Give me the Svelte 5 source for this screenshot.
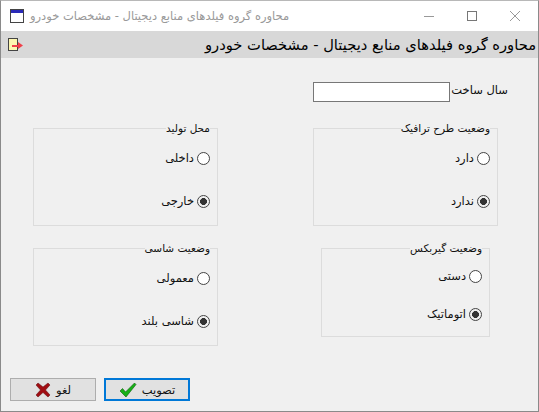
<script>
    const title = 'محاوره گروه فیلدهای منابع دیجیتال - مشخصات خودرو';

    const groups = [
        { name: 'origin', legend: 'محل تولید', cls: 'g-origin', options: ['داخلی', 'خارجی'] },
        { name: 'traffic', legend: 'وضعیت طرح ترافیک', cls: 'g-traffic', options: ['دارد', 'ندارد'] },
        { name: 'chassis', legend: 'وضعیت شاسی', cls: 'g-chassis', options: ['معمولی', 'شاسی بلند'] },
        { name: 'gearbox', legend: 'وضعیت گیربکس', cls: 'g-gearbox', options: ['دستی', 'اتوماتیک'] }
    ];
</script>

<div class="window">
    <div class="titlebar">
        <svg class="app-icon" width="14" height="15" viewBox="0 0 14 15">
            <rect x="0.5" y="0.5" width="13" height="13" fill="#fff" stroke="#444" />
            <rect x="1" y="1" width="12" height="3" fill="#2a2ab8" />
        </svg>
        <span class="title-text" dir="rtl">{title}</span>
        <div class="controls">
            <svg width="12" height="12" viewBox="0 0 12 12"><path d="M1 6.5h10" stroke="#999" fill="none" /></svg>
            <svg width="12" height="12" viewBox="0 0 12 12"><rect x="1.500" y="1.500" width="9" height="9" stroke="#777" fill="none" /></svg>
            <svg width="12" height="12" viewBox="0 0 12 12"><path d="M1 1l10 10M11 1L1 11" stroke="#999" fill="none" /></svg>
        </div>
    </div>

    <div class="band">
        <svg class="exit" width="16" height="14" viewBox="0 0 16 14">
            <rect x="0.5" y="0.5" width="9" height="12" fill="#fdf6b0" stroke="#444" />
            <path d="M4 7h6V4l5 3.500-5 3.500V9H4z" fill="#f0404a" />
        </svg>
        <span class="band-title" dir="rtl">{title}</span>
    </div>

    <div class="form">
        <div class="year">
            <input class="year-input" type="text" />
            <span class="text" dir="rtl">سال ساخت</span>
        </div>

        <div class="groups">
            {#each groups as g}
                <fieldset class="group {g.cls}">
                    <legend dir="rtl">{g.legend}</legend>
                    {#each g.options as opt, i}
                        <label class="radio">
                            <span class="text" dir="rtl">{opt}</span>
                            <input type="radio" name={g.name} checked={i === 1} />
                        </label>
                    {/each}
                </fieldset>
            {/each}
        </div>

        <div class="buttons">
            <button class="btn">
                <svg width="16" height="16" viewBox="0 0 16 16">
                    <path d="M1 3l2-2 5 4 5-4 2 2-4.500 5 4.500 5-2 2-5-4.500L3 15l-2-2 4.500-5z" fill="#a00d12" stroke="#5e0a0e" stroke-width="0.5" />
                </svg>
                <span dir="rtl">لغو</span>
            </button>
            <button class="btn primary">
                <svg width="18" height="16" viewBox="0 0 18 16">
                    <path d="M1 9l2.500-2.500L6.500 10 15.500 1 17 2.500 7 15z" fill="#16b016" stroke="#0c5c0c" stroke-width="0.6" />
                </svg>
                <span dir="rtl">تصویب</span>
            </button>
        </div>
    </div>
</div>

<style>
    :global(body) {
        background: #f0f0f0;
    }

    .window {
        width: 539px;
        height: 412px;
        box-sizing: border-box;
        border: 1px solid #8a8a8a;
        border-top-color: #b8b8b8;
        background: #f0f0f0;
        display: flex;
        flex-direction: column;
        font-family: "DejaVu Sans", sans-serif;
        color: #111;
        overflow: hidden;
    }

    .titlebar {
        height: 30px;
        background: #fff;
        display: flex;
        align-items: center;
        padding-left: 9px;
        gap: 6px;
        flex: none;
    }

    .app-icon {
        flex: none;
    }

    .title-text {
        font-size: 11.5px;
        color: #999;
    }

    .controls {
        margin-left: auto;
        display: flex;
        align-items: center;
        gap: 31px;
        padding-right: 17px;
    }

    .controls svg {
        display: block;
    }

    .band {
        height: 27px;
        background: #d8d8d8;
        display: flex;
        align-items: center;
        justify-content: space-between;
        padding: 0 2px 0 7px;
        flex: none;
    }

    .band-title {
        font-size: 14.7px;
        color: #000;
    }

    .form {
        flex: 1;
        display: flex;
        flex-direction: column;
        padding: 24px 30px 10px 9px;
    }

    .year {
        display: flex;
        align-items: center;
        justify-content: flex-end;
        gap: 3px;
        height: 20px;
    }

    .year-input {
        width: 137px;
        height: 20px;
        box-sizing: border-box;
        border: 1px solid #777;
        background: #fff;
        margin: 0;
        padding: 0;
    }

    .text,
    .btn span {
        font-size: 11.5px;
        color: #111;
        white-space: nowrap;
    }

    .year .text {
        width: 55px;
        margin-bottom: 5px;
    }

    legend {
        font-size: 10.500px;
        color: #111;
        position: absolute;
        top: -8px;
        right: 7px;
        padding: 0;
        background: #f0f0f0;
        line-height: 14px;
    }

    .groups {
        display: grid;
        grid-template-columns: 185px 185px;
        justify-content: space-between;
        grid-template-rows: 98px 98px;
        row-gap: 22px;
        margin-top: 26px;
        margin-left: 23px;
        margin-right: 10px;
    }

    .group {
        margin: 0;
        padding: 0 7px 0 0;
        border: 1px solid #dcdcdc;
        position: relative;
        box-sizing: border-box;
        display: flex;
        flex-direction: column;
        align-items: flex-end;
        min-width: 0;
    }

    .g-gearbox {
        width: 169px;
        height: 89px;
        margin-left: 8px;
    }

    .radio {
        display: flex;
        align-items: center;
        gap: 3px;
        height: 14px;
        margin-top: 22px;
    }

    .radio + .radio {
        margin-top: 29px;
    }

    .g-gearbox .radio {
        margin-top: 20px;
    }

    .g-gearbox .radio + .radio {
        margin-top: 24px;
    }

    .radio input {
        appearance: none;
        width: 13px;
        height: 13px;
        margin: 0;
        border: 1px solid #444;
        border-radius: 50%;
        background: #fff;
        box-sizing: border-box;
    }

    .radio input:checked {
        background: radial-gradient(circle, #333 0 3.2px, #f0f0f0 3.7px);
    }

    .buttons {
        margin-top: auto;
        display: flex;
        gap: 8px;
        align-items: flex-start;
    }

    .btn {
        width: 86px;
        height: 23px;
        box-sizing: border-box;
        background: #e1e1e1;
        border: 1px solid #adadad;
        display: flex;
        align-items: center;
        justify-content: center;
        gap: 5px;
        padding: 0;
        margin: 0;
        font-family: inherit;
    }

    .btn svg {
        flex: none;
    }

    .primary {
        border: 2px solid #0078d7;
    }
</style>
